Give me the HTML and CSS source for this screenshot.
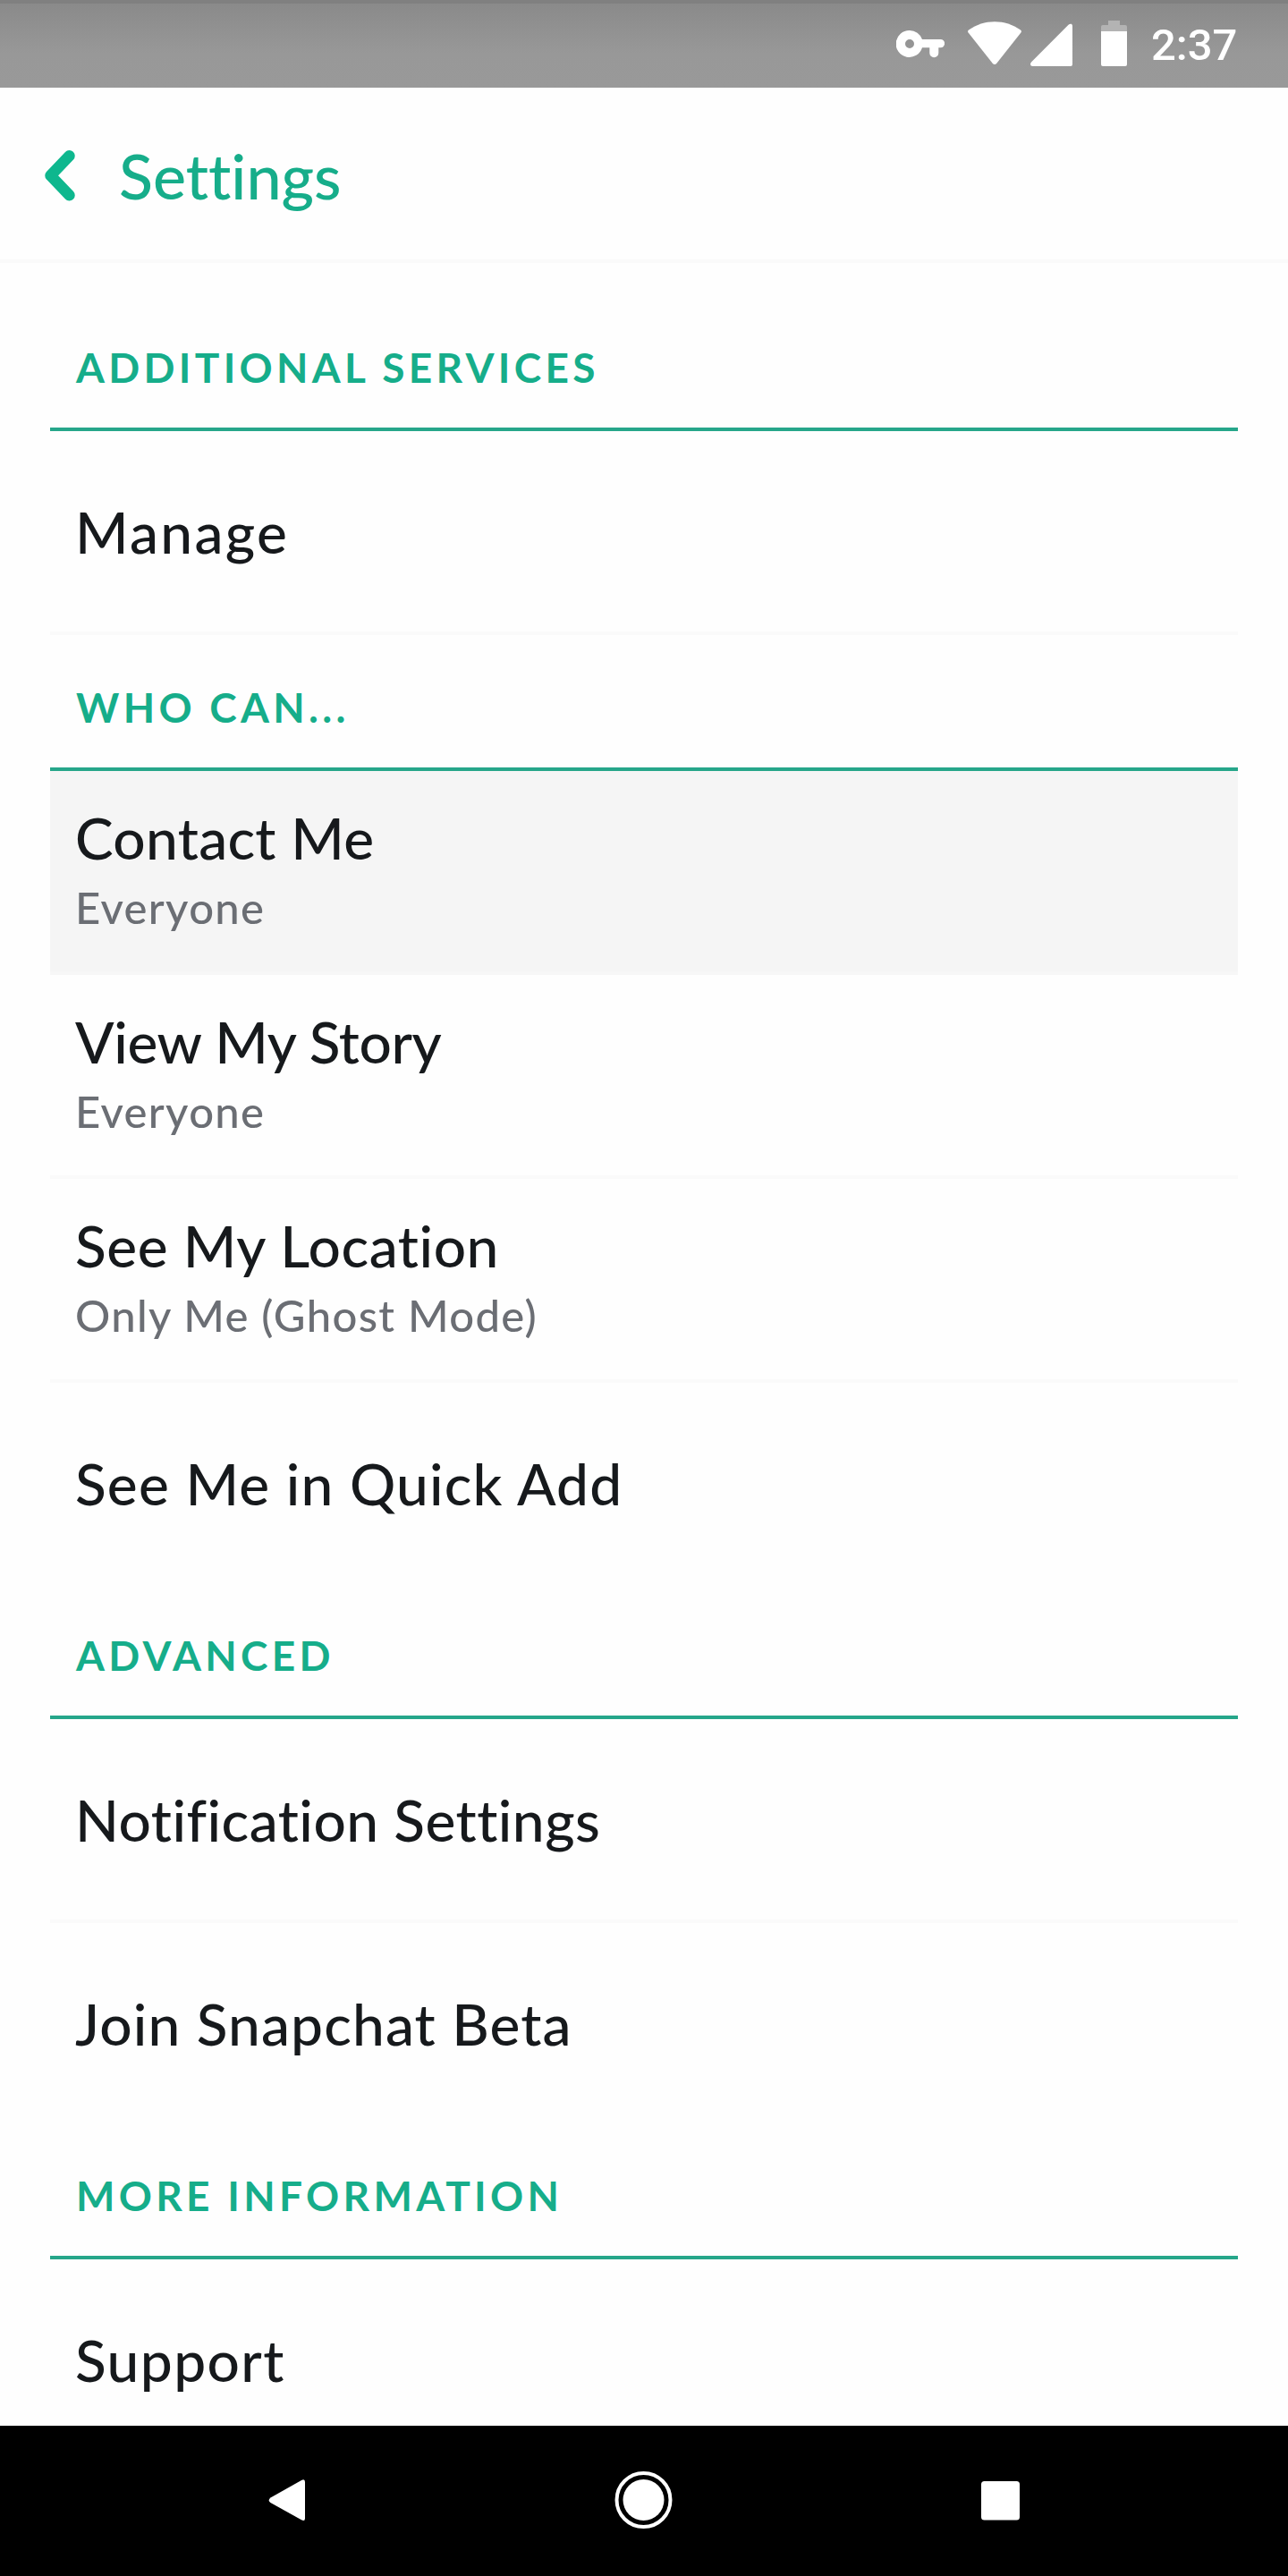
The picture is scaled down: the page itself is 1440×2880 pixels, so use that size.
FILE: index.html
```
<!DOCTYPE html>
<html lang="en">
<head>
<meta charset="utf-8">
<title>Settings</title>
<link rel="stylesheet" href="styles.css">
</head>
<body>
<div class="screen">
  <div class="status">
    <svg class="key" viewBox="0 0 54 98" width="54" height="98"><path fill="#fff" fill-rule="evenodd" d="M15 34a15 15 0 0 1 14 10h20.500a4.500 4.500 0 0 1 0 9.300H47.300v6a4.800 4.800 0 0 1-10 0v-6H29A15 15 0 1 1 15 34zm0 10a5 5 0 1 0 0 10 5 5 0 0 0 0-10z"/></svg>
    <svg class="wifi" viewBox="0 0 60 98" width="60" height="98"><path fill="#fff" d="M1 33.500C18 21 42 21 59 33.500q1.600 1.300 .4 3L32.500 70.500q-2.500 3-5 0L.6 36.500q-1.200-1.700 .4-3z"/></svg>
    <svg class="signal" viewBox="0 0 47 98" width="47" height="98"><path fill="#fff" d="M42.500 27.800Q44 26.500 45.800 26.800 47 27.500 47 29V72q0 2-2 2H2.500Q0 74 0 72q0-1.500 1.200-2.700z"/></svg>
    <svg class="battery" viewBox="0 0 29 98" width="29" height="98"><path fill="#b3b3b3" d="M8 23h13v5h6q2 0 2 2v5H0v-5q0-2 2-2h6z"/><path fill="#fff" d="M0 35h29v37q0 2-2 2H2q-2 0-2-2z"/></svg>
    <span class="clock">2:37</span>
  </div>
  <header class="header">
    <svg class="back" viewBox="0 0 36 60" width="36" height="60"><path d="M28.500 8.200L7.500 30.300 28.500 52.300" fill="none" stroke="#0eb78e" stroke-width="12.500" stroke-linecap="round" stroke-linejoin="round"/></svg>
    <h1>Settings</h1>
  </header>
  <main class="list">
    <h2 class="h-services">ADDITIONAL SERVICES</h2>
    <div class="row"><div class="label l-manage">Manage</div></div>
    <h2 class="h-who">WHO CAN...</h2>
    <div class="row double active"><div class="label l-contact">Contact Me</div><div class="value">Everyone</div></div>
    <div class="row double"><div class="label l-story">View My Story</div><div class="value">Everyone</div></div>
    <div class="row double"><div class="label l-location">See My Location</div><div class="value">Only Me (Ghost Mode)</div></div>
    <div class="row last"><div class="label l-quick">See Me in Quick Add</div></div>
    <h2 class="h-advanced">ADVANCED</h2>
    <div class="row"><div class="label l-notification">Notification Settings</div></div>
    <div class="row last"><div class="label l-join">Join Snapchat Beta</div></div>
    <h2 class="h-more">MORE INFORMATION</h2>
    <div class="row last"><div class="label l-support">Support</div></div>
  </main>
  <nav class="nav">
    <svg viewBox="0 0 70 70" width="70" height="70"><path fill="#fff" d="M52 12Q56 10 56 14V54.500q0 4-4 1.800L17.400 37q-3.400-2.800 0-5.600z"/></svg>
    <svg viewBox="0 0 70 70" width="70" height="70"><circle cx="34.500" cy="34" r="30" fill="none" stroke="#fff" stroke-width="4"/><circle cx="34.500" cy="34" r="23" fill="#fff"/></svg>
    <svg viewBox="0 0 70 70" width="70" height="70"><rect x="13" y="13" width="43" height="43.500" rx="3.500" fill="#fff"/></svg>
  </nav>
</div>
</body>
</html>
```
FILE: styles.css
```
* { box-sizing: border-box; }
body { margin: 0; background: #fff; }
h1, h2 { margin: 0; }
svg { display: block; flex: none; }

.screen {
  width: 1440px;
  height: 2880px;
  display: flex;
  flex-direction: column;
  overflow: hidden;
  background: #fefefe;
  font-family: Lato, "Open Sans", sans-serif;
  font-weight: 500;
  color: #16191c;
}

.status {
  flex: none;
  height: 98px;
  display: flex;
  justify-content: flex-end;
  padding-right: 55px;
  background: linear-gradient(#808080 0 4px, #8a8a8a 4px, #989898 60px, #999 98px);
}
.wifi { margin-left: 26px; }
.signal { margin-left: 10px; }
.battery { margin-left: 32px; }
.clock {
  width: 98px;
  margin-left: 27px;
  font: 500 49px/102px Roboto, sans-serif;
  color: #fff;
  white-space: nowrap;
}

.header {
  flex: none;
  height: 196px;
  display: flex;
  align-items: center;
  padding: 3px 0 0 49px;
  border-bottom: 4px solid #fafafa;
}
.header h1 {
  margin-left: 48px;
  font-size: 70px;
  line-height: 84px;
  font-weight: 500;
  font-variant-ligatures: none;
  color: #16ad8a;
}

.list { flex: 1; min-height: 0; padding: 36px 56px 0; overflow: hidden; }
.list h2 {
  height: 152px;
  padding: 53px 0 0 29px;
  border-bottom: 4px solid #26a68a;
  font-size: 46px;
  line-height: 56px;
  font-weight: 700;
  letter-spacing: 4.3px;
  color: #16ad8a;
  white-space: nowrap;
}
.row {
  height: 228px;
  padding-left: 28px;
  border-bottom: 4px solid #fafafa;
  white-space: nowrap;
}
.row.last { height: 224px; border-bottom: 0; }
.row.active { background: #f5f5f5; border-bottom-color: #f7f7f7; }
.label { font-size: 64px; line-height: 226px; }
.double { padding-top: 36px; }
.double .label { line-height: 77px; }
.value {
  margin-top: 10px;
  font-size: 49px;
  line-height: 59px;
  letter-spacing: 1.32px;
  color: #6b6e74;
}

/* per-label tracking */
.l-manage { letter-spacing: 2.3px; }
.l-contact { letter-spacing: .3px; }
.l-story { letter-spacing: -.38px; }
.l-location { letter-spacing: .55px; }
.l-quick { letter-spacing: 1.2px; }
.l-notification { letter-spacing: .48px; }
.l-join { letter-spacing: 1.14px; }
.l-support { letter-spacing: 1.4px; }

.nav {
  flex: none;
  height: 168px;
  display: flex;
  justify-content: space-between;
  align-items: center;
  padding: 0 286px 0 285px;
  background: #000;
}
```
